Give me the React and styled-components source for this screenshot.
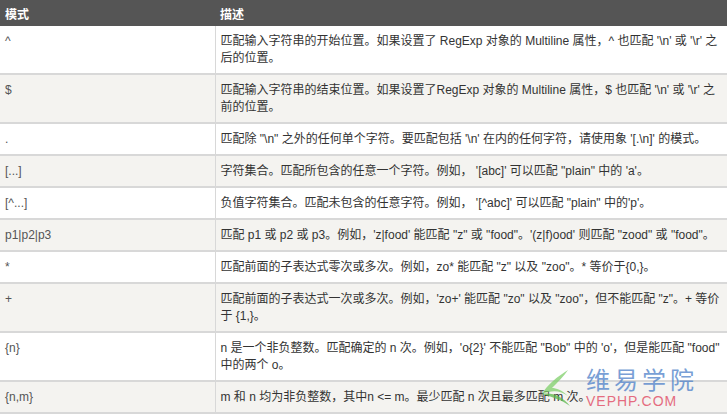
import styled, { createGlobalStyle } from 'styled-components';

const Global = createGlobalStyle`
  body { margin: 0; background: #fff; font-family: "Liberation Sans", "Noto Sans CJK SC", sans-serif; }
`;

const rows = [
  ['^', "匹配输入字符串的开始位置。如果设置了 RegExp 对象的 Multiline 属性，^ 也匹配 '\\n' 或 '\\r' 之后的位置。"],
  ['$', "匹配输入字符串的结束位置。如果设置了RegExp 对象的 Multiline 属性，$ 也匹配 '\\n' 或 '\\r' 之前的位置。"],
  ['.', "匹配除 \"\\n\" 之外的任何单个字符。要匹配包括 '\\n' 在内的任何字符，请使用象 '[.\\n]' 的模式。"],
  ['[...]', "字符集合。匹配所包含的任意一个字符。例如， '[abc]' 可以匹配 \"plain\" 中的 'a'。"],
  ['[^...]', "负值字符集合。匹配未包含的任意字符。例如， '[^abc]' 可以匹配 \"plain\" 中的'p'。"],
  ['p1|p2|p3', "匹配 p1 或 p2 或 p3。例如，'z|food' 能匹配 \"z\" 或 \"food\"。'(z|f)ood' 则匹配 \"zood\" 或 \"food\"。"],
  ['*', "匹配前面的子表达式零次或多次。例如，zo* 能匹配 \"z\" 以及 \"zoo\"。* 等价于{0,}。"],
  ['+', "匹配前面的子表达式一次或多次。例如，'zo+' 能匹配 \"zo\" 以及 \"zoo\"，但不能匹配 \"z\"。+ 等价于 {1,}。"],
  ['{n}', "n 是一个非负整数。匹配确定的 n 次。例如，'o{2}' 不能匹配 \"Bob\" 中的 'o'，但是能匹配 \"food\" 中的两个 o。"],
  ['{n,m}', "m 和 n 均为非负整数，其中n <= m。最少匹配 n 次且最多匹配 m 次。"],
];

function App() {
  return (
    <Styled.Page>
      <Global />
      <Styled.Table>
        <thead>
          <tr>
            <Styled.Th>模式</Styled.Th>
            <Styled.Th>描述</Styled.Th>
          </tr>
        </thead>
        <tbody>
          {rows.map(([p, d], i) => (
            <Styled.Row key={p} $alt={i % 2 === 1}>
              <Styled.PatternCell>{p}</Styled.PatternCell>
              <Styled.DescCell>{d}</Styled.DescCell>
            </Styled.Row>
          ))}
        </tbody>
      </Styled.Table>
      <Styled.Watermark>
        <svg width="44" height="44" viewBox="0 0 44 44">
          <path d="M30 4 C20 10 8 20 4 28 C14 24 22 24 30 30 C24 24 18 22 14 22 C20 16 26 10 30 4 Z" fill="#7fcf6a" />
          <path d="M4 28 C14 26 24 30 32 40 C24 34 14 31 4 28 Z" fill="#5bb84a" />
        </svg>
        <Styled.MarkText>
          <Styled.MarkCn>维易学院</Styled.MarkCn>
          <Styled.MarkEn>VEPHP.COM</Styled.MarkEn>
        </Styled.MarkText>
      </Styled.Watermark>
    </Styled.Page>
  );
}

const Styled = {
  Page: styled.div`
    position: relative;
    width: 727px;
    height: 416px;
    overflow: hidden;
  `,
  Table: styled.table`
    width: 727px;
    border-collapse: collapse;
    font-size: 12px;
    color: #333;
    table-layout: fixed;
  `,
  Th: styled.th`
    background: #555;
    color: #fff;
    text-align: left;
    font-weight: bold;
    height: 26px;
    padding: 0 5px;
    font-size: 12px;
    &:first-child { width: 205px; }
  `,
  Row: styled.tr`
    background: ${(p) => (p.$alt ? '#f4f3f0' : '#fff')};
    border-bottom: 2px solid #d8d8d8;
  `,
  PatternCell: styled.td`
    padding: 7px 5px 6px;
    line-height: 17px;
    vertical-align: top;
    border-right: 1px solid #d8d8d8;
    color: #555;
  `,
  DescCell: styled.td`
    padding: 7px 5px 6px;
    line-height: 17px;
    vertical-align: top;
    color: #333;
  `,
  Watermark: styled.div`
    position: absolute;
    left: 538px;
    top: 366px;
    display: flex;
    align-items: center;
    gap: 4px;
    opacity: 0.75;
    pointer-events: none;
  `,
  MarkText: styled.div`
    display: flex;
    flex-direction: column;
  `,
  MarkCn: styled.span`
    font-size: 24px;
    color: #4d7fc9;
    letter-spacing: 4px;
    line-height: 26px;
  `,
  MarkEn: styled.span`
    font-size: 14px;
    color: #e0405a;
    line-height: 14px;
    letter-spacing: 1px;
  `,
};

export default App;
